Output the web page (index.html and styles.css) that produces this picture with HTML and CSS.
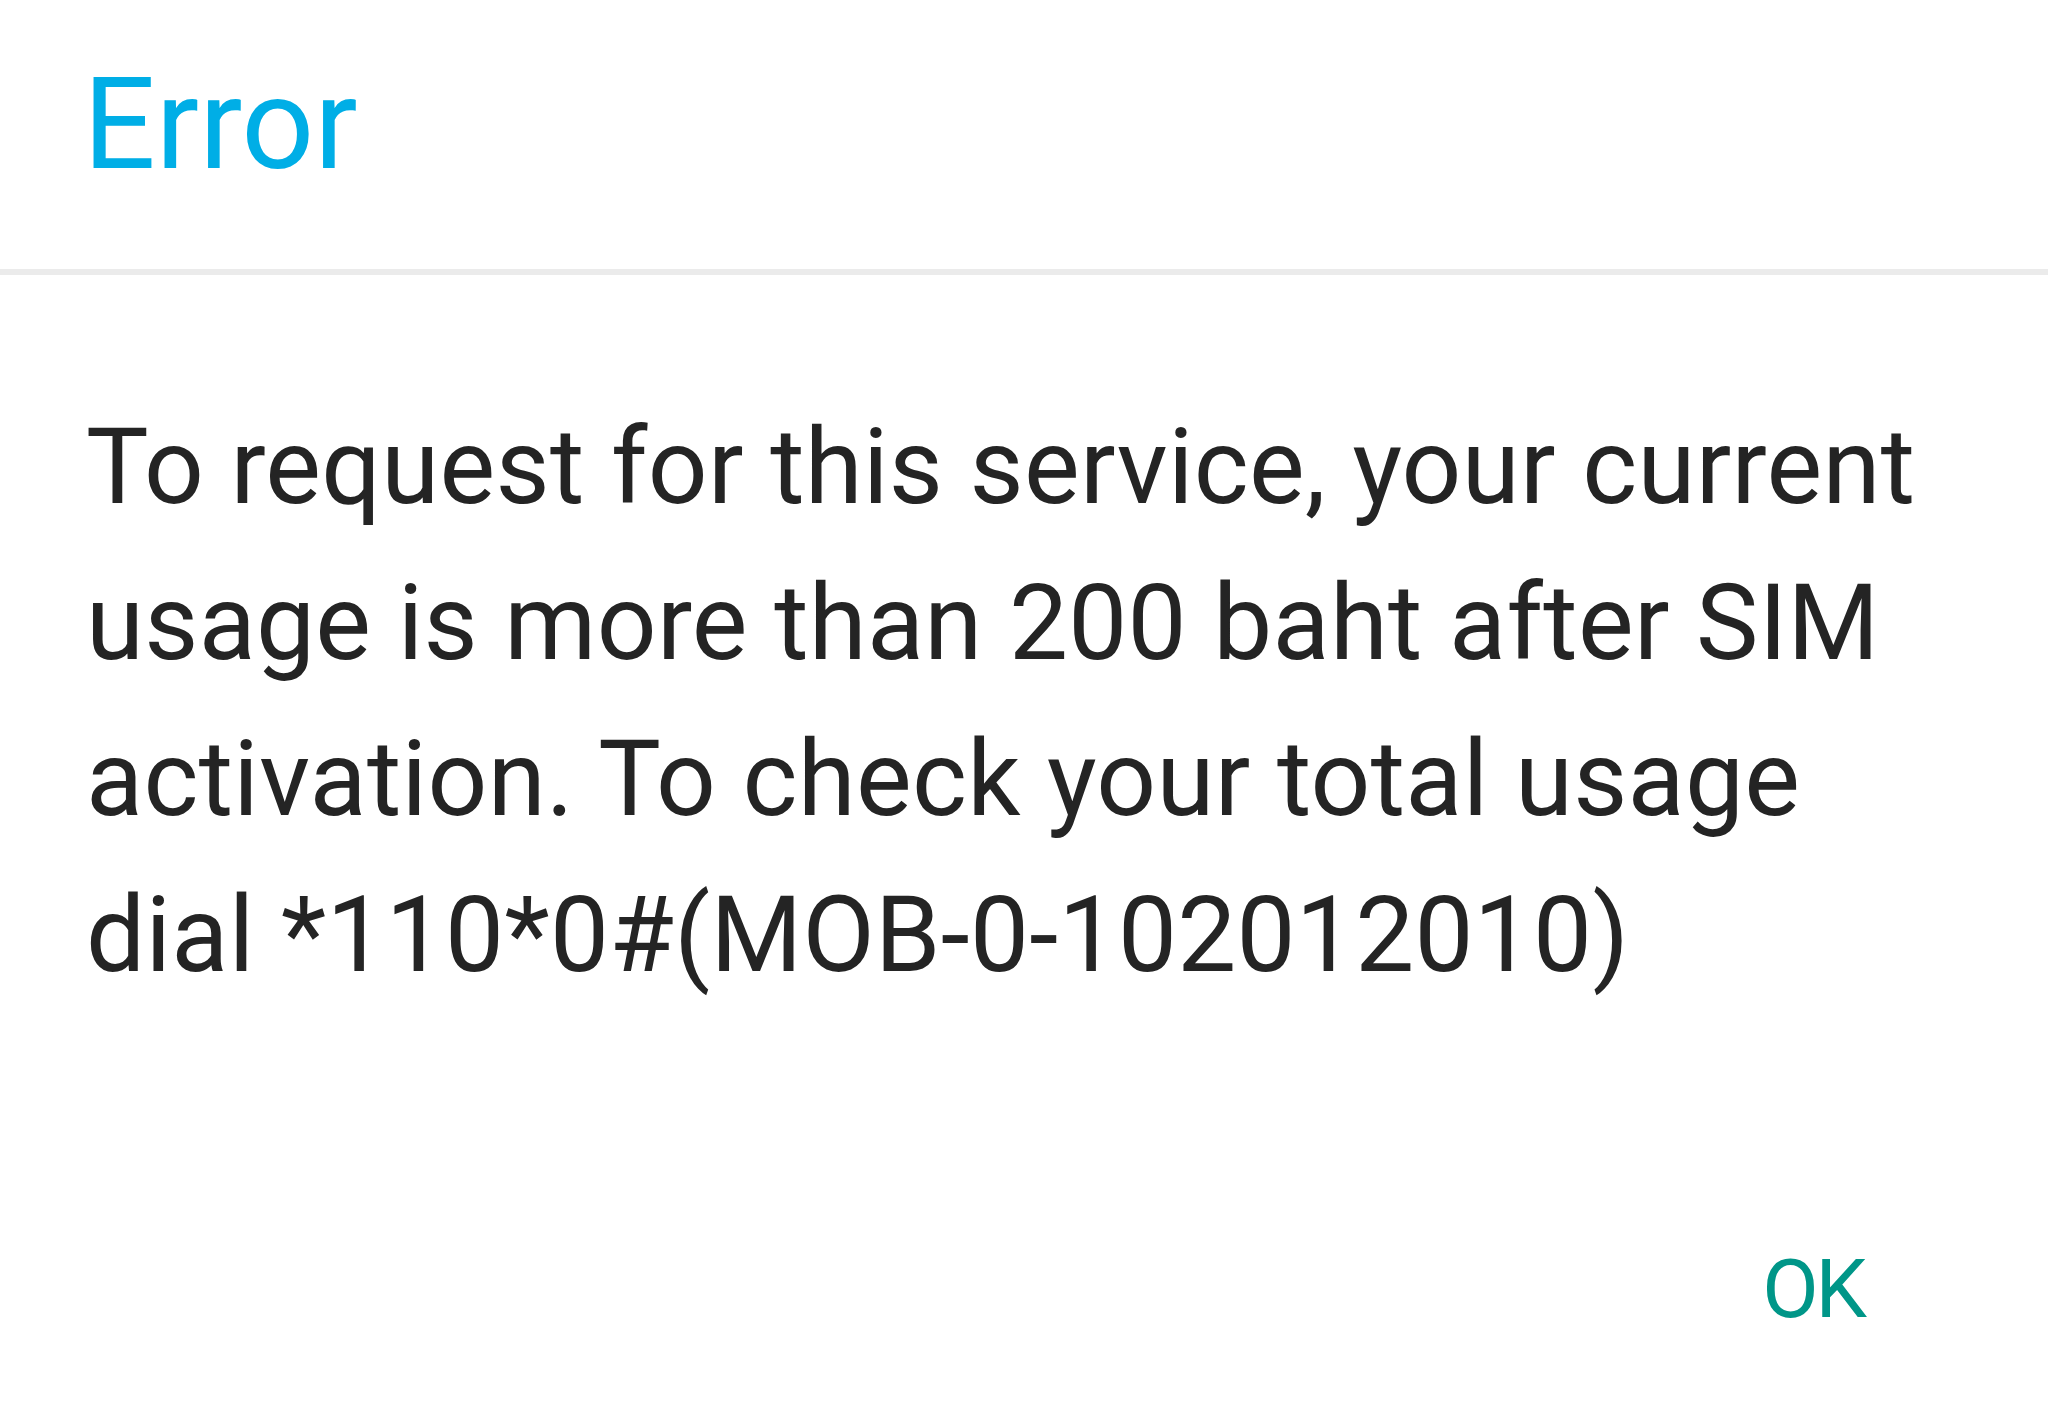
FILE: index.html
```html
<!DOCTYPE html>
<html lang="en">
<head>
<meta charset="utf-8">
<title>Error</title>
<link rel="stylesheet" href="styles.css">
</head>
<body>
<div class="dialog">
  <header class="dialog-header">
    <h1 class="dialog-title">Error</h1>
  </header>
  <div class="dialog-divider"></div>
  <div class="dialog-body">
    <p class="dialog-message">To request for this service, your current usage is more than 200 baht after SIM activation. To check your total usage dial *110*0#(MOB-0-102012010)</p>
  </div>
  <div class="dialog-actions">
    <button class="dialog-button" type="button">OK</button>
  </div>
</div>
</body>
</html>
```
FILE: styles.css
```css
html, body {
  margin: 0;
  padding: 0;
  background: #ffffff;
}

body {
  font-family: Roboto, "Liberation Sans", sans-serif;
  width: 2048px;
  height: 1426px;
  overflow: hidden;
}

.dialog {
  display: flex;
  flex-direction: column;
  width: 100%;
  height: 100%;
  background: #ffffff;
}

.dialog-header {
  padding: 48px 80px 69px 83px;
}

.dialog-title {
  margin: 0;
  font-size: 128px;
  line-height: 152px;
  font-weight: 400;
  color: #00aee6;
}

.dialog-divider {
  height: 6px;
  background: #ebebeb;
}

.dialog-body {
  padding: 115px 76px 0 86px;
}

.dialog-message {
  margin: 0;
  font-size: 105px;
  line-height: 156px;
  font-weight: 400;
  letter-spacing: 0.3px;
  color: #242424;
}

.dialog-actions {
  display: flex;
  justify-content: flex-end;
  padding: 225px 184px 0 0;
}

.dialog-button {
  border: 0;
  background: transparent;
  padding: 0;
  margin: 0;
  font-family: Roboto, "Liberation Sans", sans-serif;
  font-size: 82px;
  line-height: 100px;
  font-weight: 400;
  letter-spacing: -3px;
  color: #009688;
  cursor: pointer;
}
```
